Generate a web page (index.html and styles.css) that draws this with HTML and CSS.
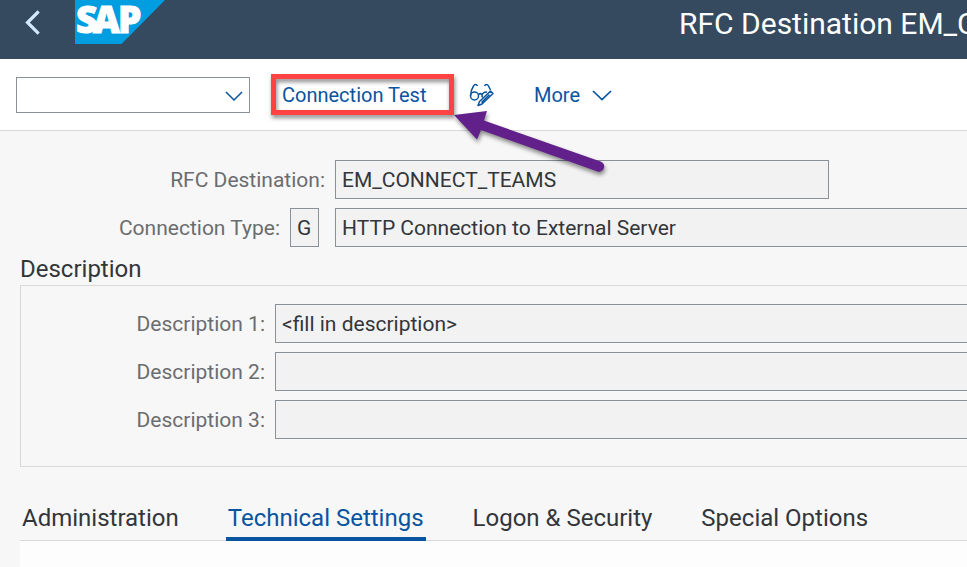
FILE: index.html
```html
<!DOCTYPE html>
<html lang="en">
<head>
<meta charset="utf-8">
<meta name="viewport" content="width=device-width, initial-scale=1">
<title>RFC Destination EM_CONNECT_TEAMS</title>
<link rel="stylesheet" href="styles.css">
</head>
<body>
<header class="shell">
  <button class="back" type="button" aria-label="Back">
    <svg width="16" height="26" viewBox="0 0 16 26"><path d="M13.500 2.500 3.500 12.500 13.500 22.500" fill="none" stroke="#d1e8ff" stroke-width="3.200" stroke-linecap="square"/></svg>
  </button>
  <svg class="logo" width="90" height="44" viewBox="0 0 90 44" role="img" aria-label="SAP">
    <path d="M0 0H90L46.500 44H0Z" fill="#009de0"/>
    <text class="logo-text" y="33"><tspan x="1">S</tspan><tspan x="18">A</tspan><tspan x="43">P</tspan></text>
  </svg>
  <h1 class="title">RFC Destination EM_CONNECT_TEAMS</h1>
</header>

<div class="toolbar" role="toolbar" aria-label="Actions">
  <div class="command">
    <select class="command-select" aria-label="Command"><option></option></select>
    <svg class="command-arrow" width="18" height="10" viewBox="0 0 18 10"><path d="M1 1 9 9 17 1" fill="none" stroke="#0854a0" stroke-width="1.500"/></svg>
  </div>
  <div class="marked">
    <button class="action" type="button">Connection Test</button>
    <svg class="arrow" width="160" height="76" viewBox="0 0 160 76" aria-hidden="true">
      <path d="M1 5 34 1 31 10.500 147.500 51.500A5 5 0 0 1 144.500 61.500L28 20 24 29.500Z" fill="#62208a"/>
    </svg>
  </div>
  <button class="action icon-action" type="button" aria-label="Display or change">
    <svg width="26" height="24" viewBox="0 0 26 24" fill="none" stroke="#0854a0" stroke-width="1.500" stroke-linejoin="round">
      <path d="M8.500 3C7.500 1 5.500 1 4.500 3C2.500 6 1.500 9 1.500 13"/>
      <circle cx="5.500" cy="13" r="4"/>
      <path d="M9.500 11.500C10.500 10.500 12 10.500 13 11.500M15.500 3C16.500 1 18.500 1 19.500 3L21.500 7M18 9.200A4 4 0 0 0 13 12.500 4 4 0 0 0 13.500 14.500"/>
      <path d="M21.500 8 24 10.500 13 21 9 22.500 10.500 18.500ZM12.500 19.500 20.500 11.500"/>
    </svg>
  </button>
  <button class="action more" type="button">More
    <svg width="20" height="12" viewBox="0 0 20 12"><path d="M1 2 10 10.500 19 2" fill="none" stroke="#0854a0" stroke-width="1.700"/></svg>
  </button>
</div>

<main class="content">
  <form class="head-form">
    <div class="row">
      <label class="label label-long" for="dest">RFC Destination:</label>
      <input class="field field-dest" id="dest" value="EM_CONNECT_TEAMS" readonly>
    </div>
    <div class="row">
      <label class="label label-short" for="type">Connection Type:</label>
      <input class="field field-code" id="type" value="G" readonly>
      <input class="field field-fill" aria-label="Connection type text" value="HTTP Connection to External Server" readonly>
    </div>
  </form>

  <h2 class="heading" id="desc">Description</h2>
  <section class="group" aria-labelledby="desc">
    <div class="row">
      <label class="label" for="d1">Description 1:</label>
      <input class="field field-fill" id="d1" value="&lt;fill in description&gt;" readonly>
    </div>
    <div class="row">
      <label class="label" for="d2">Description 2:</label>
      <input class="field field-fill" id="d2" readonly>
    </div>
    <div class="row">
      <label class="label" for="d3">Description 3:</label>
      <input class="field field-fill" id="d3" readonly>
    </div>
  </section>

  <div class="tabs" role="tablist">
    <button class="tab" type="button" role="tab">Administration</button>
    <button class="tab tab-active" type="button" role="tab" aria-selected="true">Technical Settings</button>
    <button class="tab" type="button" role="tab">Logon &amp; Security</button>
    <button class="tab" type="button" role="tab">Special Options</button>
  </div>
  <div class="panel" role="tabpanel"></div>
</main>
</body>
</html>
```
FILE: styles.css
```css
* {
  box-sizing: border-box;
}

body {
  margin: 0;
  min-height: 100vh;
  display: flex;
  flex-direction: column;
  overflow-x: hidden;
  background: #f7f7f7;
  color: #32363a;
  font-family: Roboto, "Noto Sans", sans-serif;
  font-size: 21px;
}

button,
input,
select {
  font: inherit;
  color: inherit;
}

button {
  padding: 0;
  border: 0;
  background: none;
}

svg {
  display: block;
}

.shell {
  display: flex;
  align-items: flex-start;
  height: 59px;
  padding-left: 24px;
  overflow: hidden;
  background: #354a5f;
}

.back {
  margin: 10px 35px 0 0;
}

.logo {
  flex: none;
}

.logo-text {
  fill: #fff;
  stroke: #fff;
  stroke-width: 1;
  font-family: "Open Sans", sans-serif;
  font-size: 37px;
  font-weight: 800;
}

.title {
  flex: none;
  margin: 4px 0 0 auto;
  width: 288px;
  color: #fff;
  font-size: 30px;
  font-weight: 400;
  line-height: 40px;
  white-space: nowrap;
}

.toolbar {
  display: flex;
  align-items: center;
  height: 72px;
  padding: 0 16px;
  border-bottom: 1px solid #d9d9d9;
  background: #fff;
}

.command {
  position: relative;
  width: 234px;
  margin-right: 21px;
}

.command-select {
  display: block;
  width: 100%;
  height: 36px;
  border: 1px solid #89919a;
  border-radius: 0;
  background: #fff;
  appearance: none;
}

.command-arrow {
  position: absolute;
  top: 14px;
  right: 7px;
  pointer-events: none;
}

.marked {
  position: relative;
  width: 183px;
  height: 41px;
}

.marked::before {
  content: "";
  position: absolute;
  inset: 0;
  border: 5px solid #ff4242;
  filter: drop-shadow(1px 3px 2px rgb(0 0 0 / 45%));
  pointer-events: none;
}

.action {
  position: relative;
  color: #0854a0;
  font-size: 20px;
}

.marked .action {
  height: 41px;
  padding-left: 11px;
}

.arrow {
  position: absolute;
  top: 36px;
  left: 182px;
  filter: drop-shadow(1px 3px 2px rgb(0 0 0 / 45%));
  pointer-events: none;
}

.icon-action {
  margin-left: 15px;
}

.more {
  display: flex;
  align-items: center;
  gap: 12px;
  margin-left: 39px;
}

.content {
  display: flex;
  flex: 1;
  flex-direction: column;
  padding: 29px 0 0 20px;
}

.row {
  display: flex;
  align-items: center;
}

.row + .row {
  margin-top: 9px;
}

.label {
  width: 254px;
  padding-right: 10px;
  color: #6a6d70;
  text-align: right;
  white-space: nowrap;
}

.label-long {
  width: 315px;
}

.label-short {
  width: 270px;
}

.field {
  height: 39px;
  min-width: 0;
  padding: 0 6px;
  border: 1px solid #89919a;
  border-radius: 0;
  background: #f2f2f2;
}

.field-dest {
  width: 494px;
}

.field-code {
  width: 29px;
  margin-right: 16px;
}

.field-fill {
  flex: 1;
  border-right: 0;
}

.heading {
  margin: 6px 0 0;
  font-size: 24px;
  font-weight: 400;
  line-height: 32px;
}

.group {
  padding: 18px 0 27px;
  border: 1px solid #d9d9d9;
  border-right: 0;
}

.tabs {
  display: flex;
  gap: 45px;
  margin-top: 28px;
  border-bottom: 1px solid #d9d9d9;
}

.tab {
  height: 46px;
  margin-bottom: -1px;
  padding: 4px 2px 0;
  border-bottom: 4px solid transparent;
  font-size: 24px;
  white-space: nowrap;
}

.tab-active {
  border-bottom-color: #0854a0;
  color: #0854a0;
}

.panel {
  flex: 1;
  min-height: 26px;
  background: #fdfdfd;
}
```
